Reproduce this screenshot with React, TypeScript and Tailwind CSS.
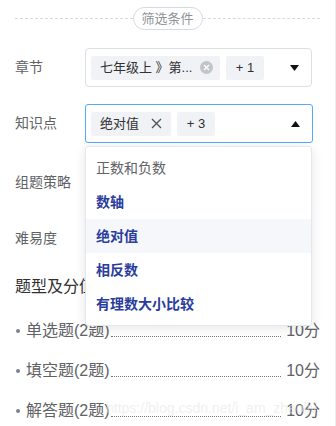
import React from "react";

const labelCls = "w-[70px] shrink-0 text-[14px] text-[#606266]";

function CaretDown({ up = false }: { up?: boolean }) {
  return (
    <svg width="9" height="6" viewBox="0 0 9 6" className={up ? "rotate-180" : ""}>
      <path d="M0 0 H9 L4.5 6 Z" fill="#111" />
    </svg>
  );
}

const options = [
  { text: "正数和负数", active: false },
  { text: "数轴", active: true },
  { text: "绝对值", active: true, hover: true },
  { text: "相反数", active: true },
  { text: "有理数大小比较", active: true },
];

const scores = ["单选题(2题)", "填空题(2题)", "解答题(2题)"];

export default function App() {
  return (
    <div
      className="relative w-[336px] h-[426px] overflow-hidden bg-white border-r border-[#eeeeee]"
      style={{ fontFamily: '"Liberation Sans", "Noto Sans CJK SC", sans-serif' }}
    >
      <div className="px-[15px] pt-[7px]">
        {/* divider */}
        <div className="flex items-center h-[23px]">
          <div className="flex-1 border-t border-dashed border-[#d6d9e0]" />
          <span className="h-[23px] px-[8px] flex items-center rounded-full border border-[#d6d9e0] text-[13px] text-[#909399]">
            筛选条件
          </span>
          <div className="flex-1 border-t border-dashed border-[#d6d9e0]" />
        </div>

        {/* 章节 */}
        <div className="flex items-center mt-[18px]">
          <span className={labelCls}>章节</span>
          <div className="flex items-center w-[227px] h-[39px] border border-[#dcdfe6] rounded-[4px] pl-[5px] pr-[12px]">
            <div className="flex items-center w-[129px] h-[24px] bg-[#f0f2f5] rounded-[2px] pl-[9px] pr-[7px] text-[13px] text-[#303133]">
              <span className="flex-1 whitespace-nowrap">七年级上 》第...</span>
              <span className="w-[13px] h-[13px] rounded-full bg-[#c0c4cc] flex items-center justify-center">
                <svg width="7" height="7" viewBox="0 0 7 7">
                  <path d="M1 1 L6 6 M6 1 L1 6" stroke="#fff" strokeWidth="1.3" />
                </svg>
              </span>
            </div>
            <div className="ml-[6px] w-[38px] h-[24px] bg-[#f0f2f5] rounded-[2px] flex items-center justify-center text-[13px] text-[#303133]">
              + 1
            </div>
            <div className="flex-1" />
            <CaretDown />
          </div>
        </div>

        {/* 知识点 */}
        <div className="relative flex items-center mt-[17px]">
          <span className={labelCls}>知识点</span>
          <div className="flex items-center w-[228px] h-[39px] border-[1.5px] border-[#53a8ff] rounded-[3px] pl-[5px] pr-[12px]">
            <div className="flex items-center w-[80px] h-[24px] bg-[#f0f2f5] rounded-[2px] pl-[9px] pr-[9px] text-[13px] text-[#303133]">
              <span className="flex-1 whitespace-nowrap">绝对值</span>
              <svg width="11" height="11" viewBox="0 0 11 11">
                <path d="M1 1 L10 10 M10 1 L1 10" stroke="#555" strokeWidth="1.4" />
              </svg>
            </div>
            <div className="ml-[6px] w-[38px] h-[24px] bg-[#f0f2f5] rounded-[2px] flex items-center justify-center text-[13px] text-[#303133]">
              + 3
            </div>
            <div className="flex-1" />
            <CaretDown up />
          </div>

          {/* dropdown */}
          <div className="absolute left-[70px] top-[42px] z-10 w-[227px] bg-white border border-[#e4e7ed] rounded-[3px] py-[4px] shadow-[0_2px_12px_rgba(0,0,0,0.1)]">
            {options.map((o) => (
              <div
                key={o.text}
                className={
                  "h-[34px] flex items-center px-[10px] text-[14px] " +
                  (o.active ? "font-bold text-[#2a3d9c] " : "text-[#606266] ") +
                  (o.hover ? "bg-[#f5f7fa]" : "")
                }
              >
                {o.text}
              </div>
            ))}
          </div>
        </div>

        <div className="flex items-center h-[40px] mt-[19px]">
          <span className={labelCls}>组题策略</span>
        </div>
        <div className="flex items-center h-[40px] mt-[16px]">
          <span className={labelCls}>难易度</span>
        </div>

        <div className="mt-[17px] text-[16px] text-[#303133] leading-[24px]">题型及分值</div>

        <div className="mt-[12px]">
          {scores.map((s) => (
            <div key={s} className="flex items-center h-[40px]">
              <span className="w-[4px] h-[4px] rounded-full bg-[#7a8294] ml-[1px] mr-[6px]" />
              <span className="text-[16px] text-[#606266] leading-[24px] whitespace-nowrap">{s}</span>
              <span className="flex-1 border-b border-dotted border-[#6b7280] mt-[10px] mx-[1px]" />
              <span className="ml-[4px] text-[16px] text-[#606266] leading-[24px]">10分</span>
            </div>
          ))}
        </div>
      </div>

      <span className="absolute left-[106px] top-[398px] text-[14px] text-[#e6e6e6]/60 whitespace-nowrap pointer-events-none">
        https://blog.csdn.net/i_am_zhaoliv
      </span>
    </div>
  );
}
